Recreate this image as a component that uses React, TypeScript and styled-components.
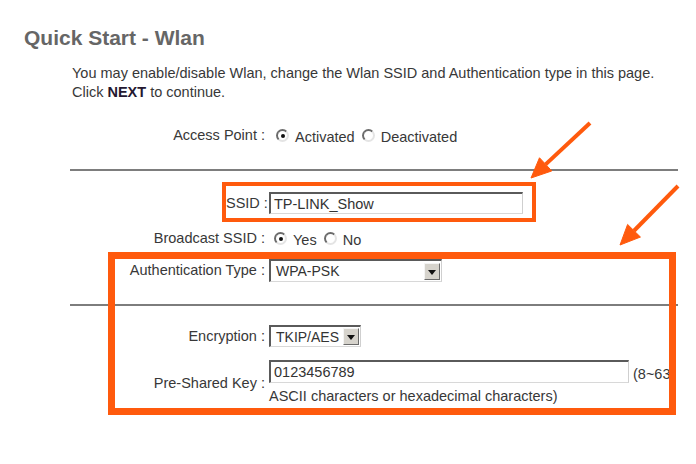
import React from 'react';
import styled, { createGlobalStyle } from 'styled-components';

const GlobalStyle = createGlobalStyle`
  html, body { margin: 0; padding: 0; background: #fff; }
  body { font-family: "Liberation Sans", Arial, sans-serif; color: #333; }
`;

const ORANGE = '#ff5a0d';

const Page = styled.div`
  position: relative;
  width: 696px;
  height: 464px;
  overflow: hidden;
  padding-top: 26px;
  box-sizing: border-box;
`;

const Title = styled.h1`
  margin: 0 0 0 24px;
  font-size: 21px;
  line-height: 24px;
  font-weight: bold;
  color: #666;
`;

const Intro = styled.p`
  margin: 14px 0 0 72px;
  font-size: 14.5px;
  line-height: 19px;
  color: #383838;
  b { color: #241830; }
`;

const Form = styled.div`
  margin-left: 70px;
  width: 608px;
  font-size: 14.5px;
  color: #383838;
`;

const Row = styled.div<{ $height: number; $top?: number }>`
  display: flex;
  align-items: center;
  gap: 4px;
  min-height: ${p => p.$height}px;
  margin-top: ${p => p.$top ?? 0}px;
`;

const Label = styled.span<{ $width?: number }>`
  flex-shrink: 0;
  width: ${p => (p.$width ? `${p.$width}px` : 'auto')};
  text-align: right;
  white-space: nowrap;
  line-height: 17px;
`;

const Rule = styled.div<{ $top: number; $left?: number; $right?: number }>`
  height: 2px;
  background: #7d7d7d;
  margin: ${p => p.$top}px ${p => -(p.$right ?? 0)}px 0 ${p => -(p.$left ?? 0)}px;
`;

const SsidBox = styled.div`
  display: flex;
  align-items: center;
  gap: 1px;
  width: fit-content;
  margin: 11px 0 0 152px;
  padding: 6px 9px 4px 0;
  border: 4px solid ${ORANGE};
`;

const AuthBox = styled.div`
  position: relative;
  margin: 2px 2px 0 38px;
  padding: 7px 0 8px;
  &::after {
    content: '';
    position: absolute;
    inset: 0;
    border: 7px solid ${ORANGE};
    pointer-events: none;
  }
`;

const TextInput = styled.div<{ $width: number; $height: number }>`
  box-sizing: border-box;
  width: ${p => p.$width}px;
  height: ${p => p.$height}px;
  flex-shrink: 0;
  padding: 0 3px;
  display: flex;
  align-items: center;
  background: #fff;
  border-style: solid;
  border-width: 2px 1px 1px 2px;
  border-color: #5a5a5a #cfcfcf #d8d8d8 #5a5a5a;
  color: #333;
  white-space: nowrap;
`;

const Select = styled.div<{ $width: number; $height: number }>`
  box-sizing: border-box;
  width: ${p => p.$width}px;
  height: ${p => p.$height}px;
  flex-shrink: 0;
  display: flex;
  align-items: center;
  justify-content: space-between;
  gap: 2px;
  padding: 0 1px 0 5px;
  background: #fff;
  border-style: solid;
  border-width: 2px 1px 1px 2px;
  border-color: #5a5a5a #cfcfcf #d8d8d8 #5a5a5a;
  color: #333;
  font-size: 14px;
  white-space: nowrap;
`;

const DropButton = styled.span`
  box-sizing: border-box;
  flex-shrink: 0;
  width: 16px;
  height: 17px;
  display: flex;
  align-items: center;
  justify-content: center;
  background: #d6d3cc;
  border: 1px solid;
  border-color: #f4f4f4 #6a6a6a #6a6a6a #f4f4f4;
  &::before {
    content: '';
    border-left: 4px solid transparent;
    border-right: 4px solid transparent;
    border-top: 5px solid #111;
    margin-top: 2px;
  }
`;

const Options = styled.div<{ $indent: number }>`
  display: flex;
  align-items: center;
  margin-left: ${p => p.$indent}px;
  padding-top: 4px;
`;

const Option = styled.span`
  display: flex;
  align-items: center;
  gap: 6px;
  margin-right: 7px;
  line-height: 17px;
`;

const Radio = styled.span<{ $checked?: boolean }>`
  box-sizing: border-box;
  width: 13px;
  height: 13px;
  margin-top: -3px;
  border-radius: 50%;
  border: 2px solid;
  border-color: #6b6b6b #e4e4e4 #e4e4e4 #6b6b6b;
  background: #fff;
  display: flex;
  align-items: center;
  justify-content: center;
  &::after {
    content: '';
    width: 4px;
    height: 4px;
    border-radius: 50%;
    background: ${p => (p.$checked ? '#111' : 'transparent')};
  }
`;

const KeyCell = styled.div`
  display: flex;
  flex-direction: column;
`;

const KeyLine = styled.div`
  display: flex;
  align-items: flex-end;
  gap: 4px;
`;

const Hint = styled.span`
  line-height: 18px;
  white-space: nowrap;
`;

const HintWrap = styled.div`
  margin-top: 2px;
  line-height: 22px;
`;

const Arrows = styled.svg`
  position: absolute;
  left: 0;
  top: 0;
  pointer-events: none;
`;

const Arrow: React.FC<{ from: [number, number]; to: [number, number] }> = ({ from, to }) => {
  const dx = to[0] - from[0];
  const dy = to[1] - from[1];
  const len = Math.hypot(dx, dy);
  const ux = dx / len;
  const uy = dy / len;
  const bx = to[0] - ux * 20;
  const by = to[1] - uy * 20;
  const px = -uy * 9;
  const py = ux * 9;
  return (
    <g fill={ORANGE} stroke={ORANGE}>
      <line x1={from[0]} y1={from[1]} x2={bx} y2={by} strokeWidth={4} />
      <polygon points={`${to[0]},${to[1]} ${bx + px},${by + py} ${bx - px},${by - py}`} strokeWidth={1} />
    </g>
  );
};

export default function App() {
  return (
    <Page>
      <GlobalStyle />
      <Title>Quick Start - Wlan</Title>
      <Intro>
        You may enable/disable Wlan, change the Wlan SSID and Authentication type in this page.
        <br />
        Click <b>NEXT</b> to continue.
      </Intro>
      <Form>
        <Row $height={24} $top={21}>
          <Label $width={195}>Access Point :</Label>
          <Options $indent={7}>
            <Option><Radio $checked />Activated</Option>
            <Option><Radio />Deactivated</Option>
          </Options>
        </Row>
        <Rule $top={22} />
        <SsidBox>
          <Label>SSID :</Label>
          <TextInput $width={254} $height={22}>TP-LINK_Show</TextInput>
        </SsidBox>
        <Row $height={24} $top={4}>
          <Label $width={195}>Broadcast SSID :</Label>
          <Options $indent={5}>
            <Option><Radio $checked />Yes</Option>
            <Option><Radio />No</Option>
          </Options>
        </Row>
        <AuthBox>
          <Row $height={23}>
            <Label $width={157}>Authentication Type :</Label>
            <Select $width={173} $height={23}>
              WPA-PSK
              <DropButton />
            </Select>
          </Row>
          <Rule $top={22} $left={38} $right={2} />
          <Row $height={22} $top={19}>
            <Label $width={157}>Encryption :</Label>
            <Select $width={92} $height={22}>
              TKIP/AES
              <DropButton />
            </Select>
          </Row>
          <Row $height={47} $top={13}>
            <Label $width={157}>Pre-Shared Key :</Label>
            <KeyCell>
              <KeyLine>
                <TextInput $width={360} $height={23}>0123456789</TextInput>
                <Hint>(8~63</Hint>
              </KeyLine>
              <HintWrap>ASCII characters or hexadecimal characters)</HintWrap>
            </KeyCell>
          </Row>
        </AuthBox>
      </Form>
      <Arrows width={696} height={464} viewBox="0 0 696 464">
        <Arrow from={[590, 123]} to={[531, 178]} />
        <Arrow from={[678, 186]} to={[620, 245]} />
      </Arrows>
    </Page>
  );
}
